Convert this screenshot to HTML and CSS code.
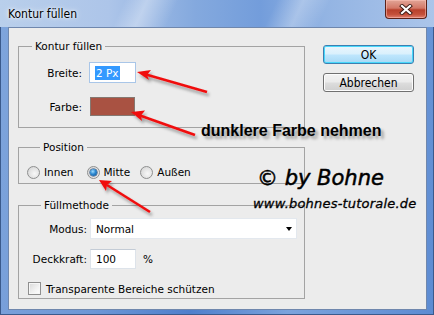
FILE: index.html
```html
<!DOCTYPE html>
<html lang="de">
<head>
<meta charset="utf-8">
<title>Kontur füllen</title>
<link rel="stylesheet" href="styles.css">
</head>
<body>
<div class="window">
  <header class="titlebar">
    <span class="title">Kontur füllen</span>
    <span class="close" aria-label="Schließen">
      <svg width="14" height="11" viewBox="0 0 14 11">
        <path d="M3 2 L11 9 M11 2 L3 9" stroke="#3a1a14" stroke-width="4" stroke-linecap="square"/>
        <path d="M3 2 L11 9 M11 2 L3 9" stroke="#ffffff" stroke-width="2.2" stroke-linecap="square"/>
      </svg>
    </span>
  </header>
  <div class="frame">
    <div class="client">
      <div class="groups">
        <fieldset class="group g-kontur">
          <legend>Kontur füllen</legend>
          <div class="form-grid kontur-grid">
            <label class="lbl">Breite:</label>
            <span class="textbox focused w-small"><span class="sel">2 Px</span></span>
            <label class="lbl">Farbe:</label>
            <span class="swatch"></span>
          </div>
        </fieldset>
        <fieldset class="group g-position">
          <legend>Position</legend>
          <div class="radios">
            <span class="radio-item"><span class="radio"></span>Innen</span>
            <span class="radio-item"><span class="radio checked"></span>Mitte</span>
            <span class="radio-item"><span class="radio"></span>Außen</span>
          </div>
        </fieldset>
        <fieldset class="group g-fill">
          <legend>Füllmethode</legend>
          <div class="form-grid fill-grid">
            <label class="lbl">Modus:</label>
            <span class="select">Normal<span class="caret"></span></span>
            <label class="lbl">Deckkraft:</label>
            <span class="pct-row"><span class="textbox w-small2">100</span><span class="pct">%</span></span>
          </div>
          <div class="check-row"><span class="checkbox"></span>Transparente Bereiche schützen</div>
        </fieldset>
      </div>
      <div class="buttons">
        <span class="btn default">OK</span>
        <span class="btn">Abbrechen</span>
      </div>
    </div>
  </div>
  <div class="annotations">
    <svg class="arrows" width="434" height="315" viewBox="0 0 434 315">
      <defs>
        <filter id="sh" x="-20%" y="-20%" width="140%" height="160%">
          <feDropShadow dx="2" dy="3" stdDeviation="1.6" flood-color="#000" flood-opacity="0.35"/>
        </filter>
      </defs>
      <g filter="url(#sh)" fill="#f01010" stroke="#f01010">
        <line x1="207" y1="92" x2="146" y2="74.5" stroke-width="2.6"/>
        <polygon points="137,72 151,70 147,75 149,80" stroke="none"/>
        <line x1="195" y1="135" x2="140" y2="115.5" stroke-width="2.6"/>
        <polygon points="131,112 145,110.5 141,115.5 142,121" stroke="none"/>
        <line x1="150" y1="212" x2="107" y2="185" stroke-width="2.6"/>
        <polygon points="99,180 112,181 107,185 106,191" stroke="none"/>
      </g>
    </svg>
    <span class="note">dunklere Farbe nehmen</span>
    <span class="sig">© by Bohne</span>
    <span class="url">www.bohnes-tutorale.de</span>
  </div>
</div>
</body>
</html>
```
FILE: styles.css
```css
html, body {
  margin: 0;
  padding: 0;
}
body {
  width: 434px;
  height: 315px;
  overflow: hidden;
  font-family: "DejaVu Sans", sans-serif;
  font-size: 10.5px;
  color: #000;
}
.window {
  position: relative;
  width: 434px;
  height: 315px;
  display: flex;
  flex-direction: column;
  background: linear-gradient(100deg, #7fa5dc 0%, #6d97d6 30%, #4f7fcc 50%, #7ba3dc 70%, #5c8bd2 100%);
  box-shadow: inset 0 0 0 1px #3a5a8c;
}
.titlebar {
  height: 27px;
  flex: none;
  display: flex;
  align-items: flex-start;
  justify-content: space-between;
  background:
    linear-gradient(115deg, rgba(255,255,255,0) 0%, rgba(255,255,255,0) 28%, rgba(255,255,255,0.35) 33%, rgba(255,255,255,0) 40%, rgba(255,255,255,0) 62%, rgba(255,255,255,0.3) 68%, rgba(255,255,255,0) 74%),
    linear-gradient(90deg, #b9cfeb 0%, #adc5e9 25%, #84a9de 45%, #739ddb 60%, #93b4e3 75%, #abc5ea 100%);
}
.title {
  font-family: "DejaVu Sans Condensed", "DejaVu Sans", sans-serif;
  font-stretch: condensed;
  font-size: 12px;
  line-height: 14px;
  margin: 7px 0 0 8px;
  color: #000;
  text-shadow: 0 0 6px rgba(255,255,255,0.9), 0 0 3px rgba(255,255,255,0.9);
}
.close {
  width: 42px;
  height: 19px;
  margin-right: 7px;
  box-sizing: border-box;
  border: 1px solid #5b2219;
  border-top: none;
  border-radius: 0 0 4px 4px;
  background: linear-gradient(180deg, #e2a597 0%, #d37867 45%, #b8402c 55%, #c4503a 80%, #e08070 100%);
  display: flex;
  align-items: center;
  justify-content: center;
  box-shadow: inset 0 0 0 1px rgba(255,200,190,0.5);
}
.close svg { display: block; }
.frame {
  flex: 1;
  padding: 0 7px 5px 8px;
  display: flex;
}
.client {
  flex: 1;
  border: 1px solid #6f87ad;
  background: #ececec;
  display: flex;
  gap: 18px;
  padding: 11px 12px 0 9px;
}
.groups {
  width: 287px;
  display: flex;
  flex-direction: column;
}
.group {
  margin: 0;
  border: 1px solid #a3a3a3;
  padding: 0;
  min-width: 0;
}
.group legend {
  margin-left: 13px;
  padding: 0 3px;
  line-height: 14px;
  height: 14px;
}
.g-kontur { padding: 9px 0 11px 0; }
.g-position { margin-top: 12px; padding: 11px 0 4px 8px; }
.g-fill { margin-top: 14px; padding: 6px 8px 3px 9px; }

.form-grid {
  display: grid;
  align-items: center;
}
.kontur-grid {
  grid-template-columns: 63px auto;
  column-gap: 7px;
  row-gap: 14px;
  grid-template-rows: 21px 19px;
  justify-items: start;
}
.fill-grid {
  grid-template-columns: 59px 1fr;
  column-gap: 3px;
  row-gap: 10px;
  grid-template-rows: 21px 20px;
}
.lbl {
  justify-self: end;
  line-height: 14px;
}
.textbox {
  box-sizing: border-box;
  height: 100%;
  background: #fff;
  border: 1px solid #dde3ea;
  border-top-color: #c4ccd6;
  display: flex;
  align-items: center;
  padding-left: 5px;
}
.w-small { width: 47px; height: 21px; }
.w-small2 { width: 46px; height: 20px; }
.focused {
  border: 1px solid #a9c6e8;
  padding-left: 5px;
}
.sel {
  background: #3399ff;
  color: #fff;
  line-height: 14px;
  padding: 0 1px;
}
.swatch {
  width: 45px;
  height: 19px;
  box-sizing: border-box;
  margin-left: 1px;
  background: #a95242;
  border: 1px solid #857871;
}
.radios {
  display: flex;
  align-items: center;
  height: 14px;
}
.radio-item {
  display: inline-flex;
  align-items: center;
  gap: 4px;
  line-height: 14px;
  margin-right: 13px;
}
.radio-item:nth-child(2) { margin-right: 10px; }
.radio {
  width: 13px;
  height: 13px;
  box-sizing: border-box;
  border-radius: 50%;
  border: 1px solid #8e8f8f;
  background: radial-gradient(circle at 60% 60%, #f8f8f8 0%, #e2e2e2 55%, #cfcfcf 100%);
  position: relative;
}
.radio.checked::after {
  content: "";
  position: absolute;
  left: 2px;
  top: 2px;
  width: 7px;
  height: 7px;
  border-radius: 50%;
  background: radial-gradient(circle at 40% 35%, #9fdcff 0%, #2a87d0 45%, #0d4c8c 100%);
  box-shadow: 0 0 0 0.5px #1a3c66;
}
.select {
  box-sizing: border-box;
  width: 207px;
  height: 21px;
  background: #fff;
  border: 1px solid #e3e8ee;
  display: flex;
  align-items: center;
  padding-left: 5px;
  position: relative;
  justify-content: space-between;
}
.caret {
  width: 0;
  height: 0;
  border-left: 3.5px solid transparent;
  border-right: 3.5px solid transparent;
  border-top: 4px solid #000;
  margin-right: 4px;
}
.pct-row {
  display: flex;
  align-items: center;
  height: 20px;
}
.pct { margin-left: 7px; }
.check-row {
  margin-top: 13px;
  display: flex;
  align-items: center;
  gap: 5px;
  height: 13px;
  line-height: 14px;
}
.checkbox {
  width: 13px;
  height: 13px;
  box-sizing: border-box;
  border: 1px solid #8f8f8f;
  background: linear-gradient(135deg, #d8d8d8 0%, #f2f2f2 60%, #ffffff 100%);
  box-shadow: inset 0 0 0 1px #f6f6f6;
}
.buttons {
  margin-top: 6px;
  width: 91px;
  display: flex;
  flex-direction: column;
  gap: 9px;
}
.btn {
  box-sizing: border-box;
  height: 19px;
  border: 1px solid #707070;
  border-radius: 3px;
  background: linear-gradient(180deg, #f2f2f2 0%, #ebebeb 48%, #dddddd 52%, #cfcfcf 100%);
  display: flex;
  align-items: center;
  justify-content: center;
  font-family: "DejaVu Sans Condensed", "DejaVu Sans", sans-serif;
  font-stretch: condensed;
  font-size: 12px;
  box-shadow: inset 0 0 0 1px #fcfcfc;
}
.btn.default {
  border-color: #3c7fb1;
  background: linear-gradient(180deg, #eaf6fd 0%, #d9f0fc 48%, #bee6fd 52%, #a7d9f5 100%);
  box-shadow: inset 0 0 0 1px #48d8fb;
}
.annotations {
  position: absolute;
  inset: 0;
  pointer-events: none;
}
.arrows {
  position: absolute;
  left: 0;
  top: 0;
}
.note {
  position: absolute;
  left: 201px;
  top: 122px;
  font-family: "Liberation Sans", Arial, sans-serif;
  font-weight: bold;
  font-size: 16px;
  line-height: 18px;
  color: #000;
  text-shadow: 3px 3px 3px rgba(0,0,0,0.35);
  white-space: nowrap;
}
.sig {
  position: absolute;
  left: 257px;
  top: 165px;
  font-family: "DejaVu Sans", sans-serif;
  font-style: oblique;
  font-size: 21px;
  -webkit-text-stroke: 0.5px #000;
  line-height: 26px;
  color: #000;
  white-space: nowrap;
}
.url {
  position: absolute;
  left: 253px;
  top: 196px;
  font-family: "DejaVu Sans", sans-serif;
  font-style: oblique;
  font-size: 13px;
  letter-spacing: 0.2px;
  -webkit-text-stroke: 0.3px #000;
  line-height: 16px;
  color: #000;
  white-space: nowrap;
}
```
